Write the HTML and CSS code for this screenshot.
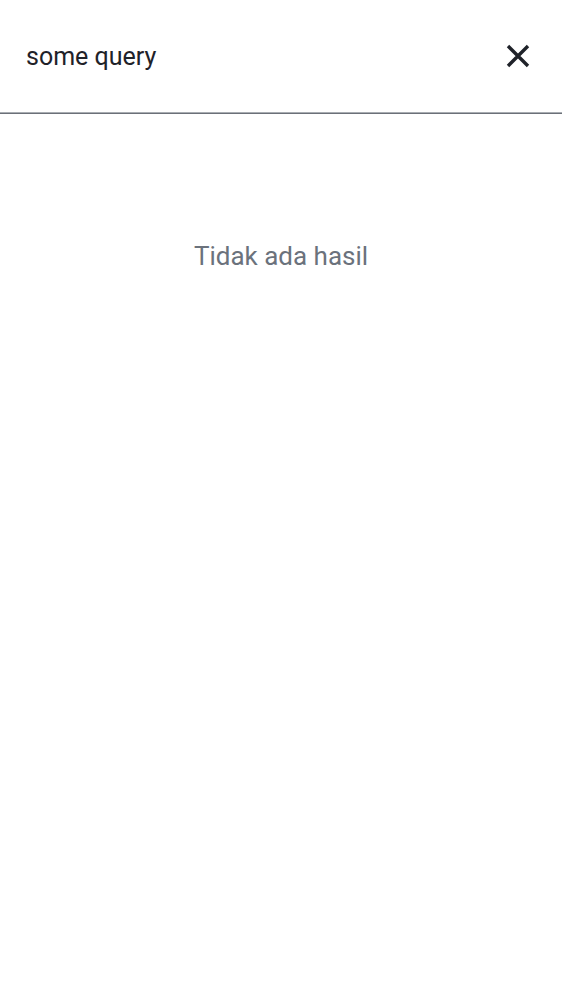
FILE: index.html
```html
<!DOCTYPE html>
<html>
<head>
<meta charset="utf-8">
<link rel="stylesheet" href="styles.css">
</head>
<body>
<div class="search-bar">
  <span class="query">some query</span>
  <button class="close" aria-label="close">
    <svg viewBox="0 0 28 28" width="28" height="28"><path d="M4 4 24 24M24 4 4 24" stroke="#1f2229" stroke-width="3.4" fill="none"/></svg>
  </button>
</div>
<div class="empty">Tidak ada hasil</div>
</body>
</html>
```
FILE: styles.css
```css
html, body { margin: 0; padding: 0; background: #fff; }
body { font-family: Roboto, "Noto Sans", sans-serif; }
.search-bar {
  height: 114px;
  box-sizing: border-box;
  display: flex;
  align-items: center;
  justify-content: space-between;
  padding: 0 30px 0 26px;
  border-bottom: 1px solid #6b7078;
  box-shadow: inset 0 -1px 0 #a9adb2;
}
.query { font-size: 25px; color: #1f2229; }
.close {
  background: none; border: 0; padding: 0; width: 28px; height: 28px;
  margin-bottom: 2px;
  display: flex; align-items: center; justify-content: center; cursor: pointer;
}
.close svg { display: block; }
.empty {
  text-align: center;
  font-size: 26px;
  color: #6b727c;
  padding-top: 127px;
}
```
